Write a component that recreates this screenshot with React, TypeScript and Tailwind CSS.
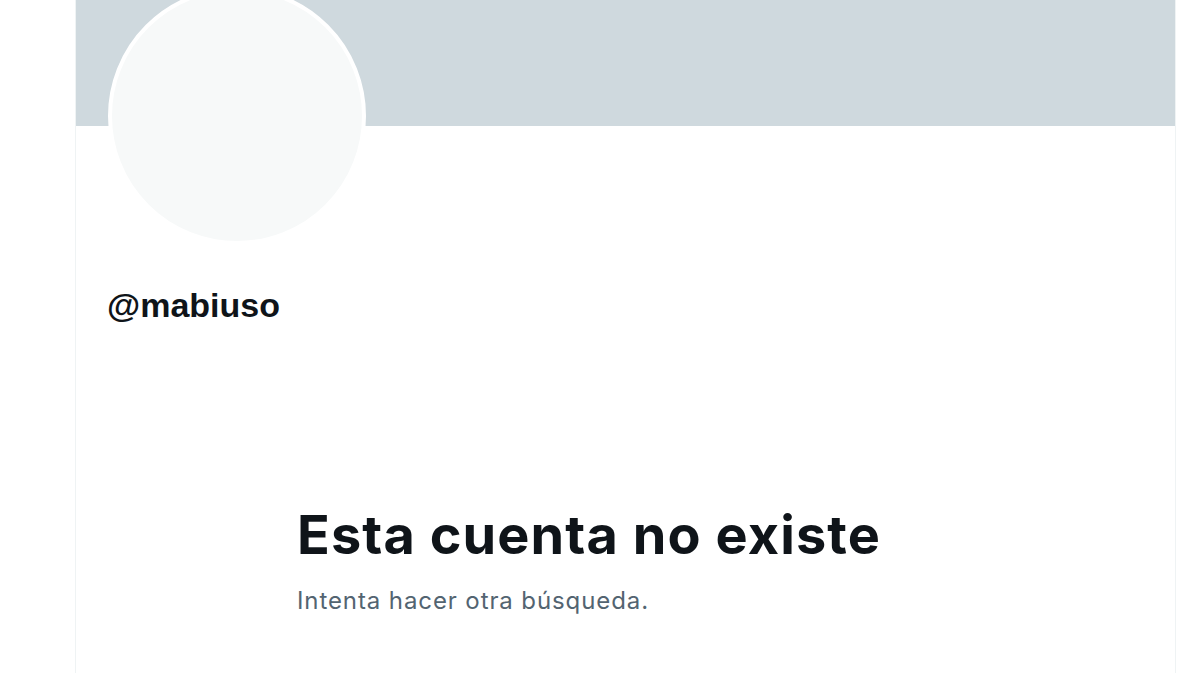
export default function App() {
  return (
    <div className="w-[1200px] h-[673px] overflow-hidden bg-white">
      <div className="ml-[75px] w-[1101px] h-full border-x border-[#eff3f4] flex flex-col">
        <div className="h-[126px] bg-[#cfd9de] shrink-0" />
        <div className="pl-[32px]">
          <div className="-mt-[139px] w-[258px] h-[258px] rounded-full border-4 border-white bg-[#f7f9f9]" />
        </div>
        <div
          className="pl-[31px] mt-[40px] text-[34px] leading-[40px] font-bold text-[#0f1419]"
          style={{ fontFamily: '"Liberation Sans", Arial, sans-serif' }}
        >
          @mabiuso
        </div>
        <div className="pl-[221px] mt-[178px]">
          <div
            className="text-[54px] leading-[64px] font-bold text-[#0f1419] tracking-[1.1px]"
            style={{ fontFamily: 'Inter, "Liberation Sans", sans-serif' }}
          >
            Esta cuenta no existe
          </div>
          <div
            className="mt-[20px] text-[24px] leading-[28px] text-[#536471] tracking-[0.9px]"
            style={{ fontFamily: 'Inter, "Liberation Sans", sans-serif' }}
          >
            Intenta hacer otra búsqueda.
          </div>
        </div>
      </div>
    </div>
  );
}
